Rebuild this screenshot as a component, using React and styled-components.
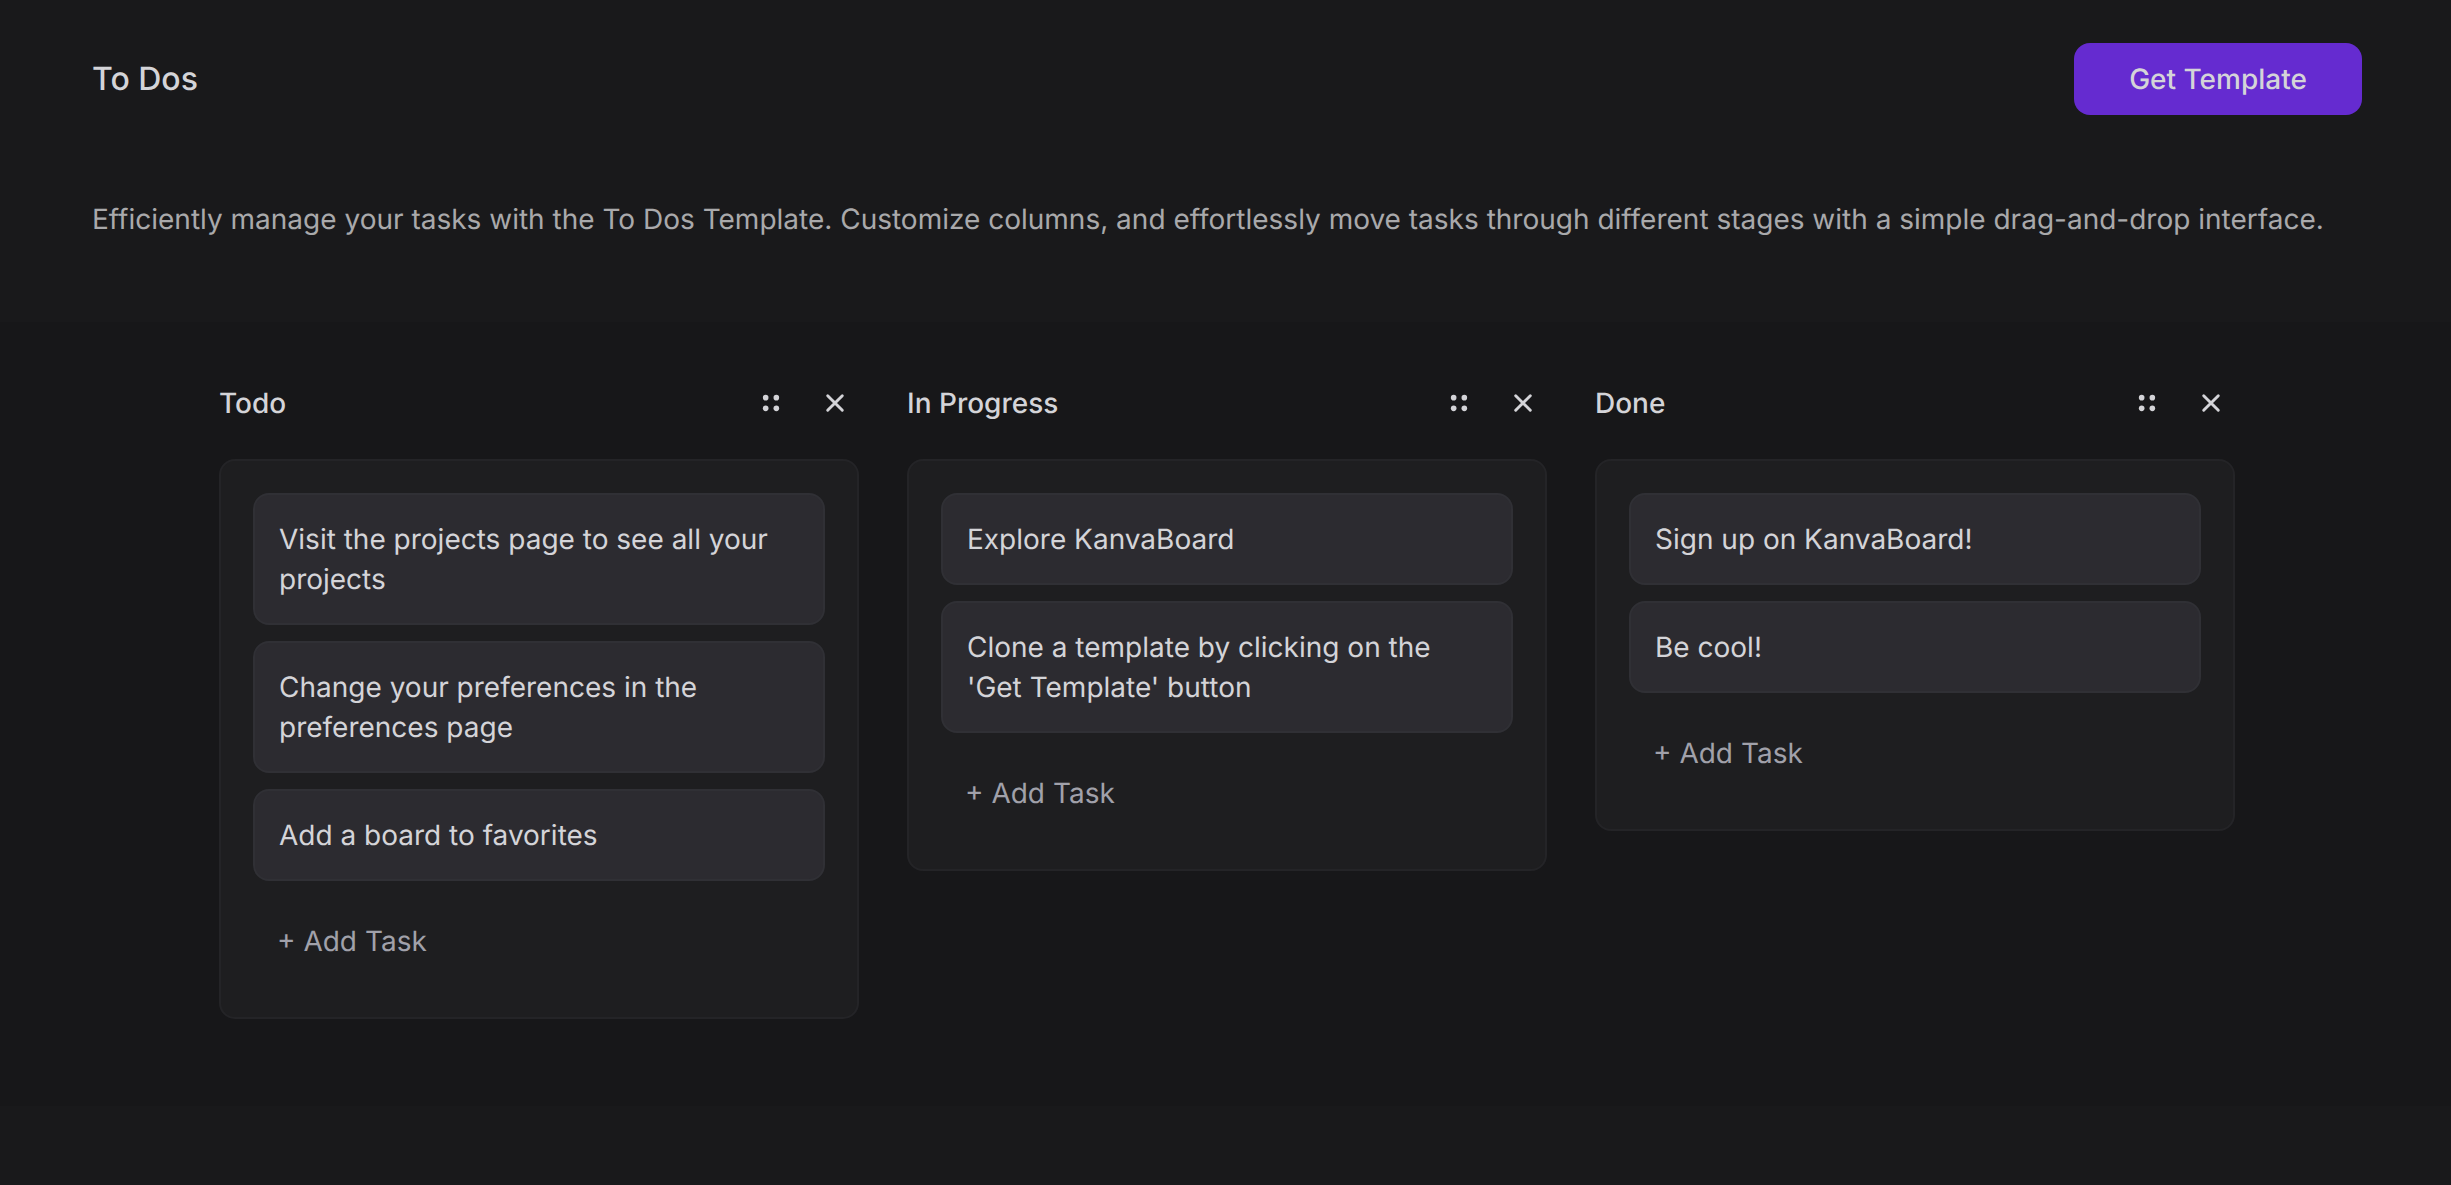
import React from 'react';
import styled, { createGlobalStyle } from 'styled-components';

const GlobalStyle = createGlobalStyle`
  *, *::before, *::after { box-sizing: border-box; }
  body {
    margin: 0;
    background: #19191b;
    color: #d4d4d8;
    font-family: Inter, "Noto Sans", sans-serif;
    font-size: 28px;
    line-height: 40px;
    text-rendering: geometricPrecision;
  }
  h1, h2, p, ul { margin: 0; padding: 0; }
  button { border: 0; background: none; color: inherit; font: inherit; text-rendering: inherit; cursor: pointer; }
`;

const Header = styled.header`
  padding: 43px 89px 83px 92px;
`;

const TitleBar = styled.div`
  display: flex;
  align-items: center;
  justify-content: space-between;
  margin-bottom: 84px;
`;

const Title = styled.h1`
  font-size: 32px;
  font-weight: 500;
`;

const PrimaryButton = styled.button`
  height: 72px;
  min-width: 288px;
  padding: 0 48px;
  border-radius: 16px;
  background: #652bd0;
  font-weight: 500;
`;

const Description = styled.p`
  color: #a9a9ab;
`;

const Board = styled.main`
  display: flex;
  justify-content: center;
  align-items: flex-start;
  gap: 48px;
  padding: 57px 89px 87px 92px;
  background: #171719;
`;

const Column = styled.section`
  flex: 0 1 640px;
  min-width: 0;
`;

const ColumnHeader = styled.div`
  display: flex;
  align-items: center;
  gap: 16px;
  margin-bottom: 32px;
`;

const ColumnTitle = styled.h2`
  flex: 1;
  font-size: 28px;
  font-weight: 500;
`;

const IconButton = styled.button`
  display: grid;
  place-items: center;
  width: 48px;
  height: 48px;
  padding: 0;
`;

const TaskPanel = styled.div`
  padding: 32px;
  border: 2px solid #242427;
  border-radius: 16px;
  background: #1e1e20;
`;

const TaskList = styled.ul`
  display: grid;
  gap: 16px;
  margin-bottom: 16px;
  list-style: none;
`;

const Task = styled.li`
  padding: 24px;
  border: 2px solid #303035;
  border-radius: 16px;
  background: #2c2b30;
`;

const AddTask = styled.button`
  display: block;
  width: 100%;
  padding: 24px;
  color: #a1a1aa;
  text-align: left;
`;

const DotsIcon = () => (
  <svg width="32" height="32" viewBox="0 0 32 32" fill="currentColor" aria-hidden="true">
    <circle cx="10.67" cy="10.67" r="2.8" />
    <circle cx="21.33" cy="10.67" r="2.8" />
    <circle cx="10.67" cy="21.33" r="2.8" />
    <circle cx="21.33" cy="21.33" r="2.8" />
  </svg>
);

const CloseIcon = () => (
  <svg width="32" height="32" viewBox="0 0 32 32" fill="none" stroke="currentColor" strokeWidth="2.9" strokeLinecap="round" aria-hidden="true">
    <path d="M8.7 8.7 23.3 23.3M23.3 8.7 8.7 23.3" />
  </svg>
);

const columns = [
  {
    title: 'Todo',
    tasks: [
      'Visit the projects page to see all your projects',
      'Change your preferences in the preferences page',
      'Add a board to favorites',
    ],
  },
  {
    title: 'In Progress',
    tasks: ['Explore KanvaBoard', "Clone a template by clicking on the 'Get Template' button"],
  },
  { title: 'Done', tasks: ['Sign up on KanvaBoard!', 'Be cool!'] },
];

export default function App() {
  return (
    <>
      <GlobalStyle />
      <Header>
        <TitleBar>
          <Title>To Dos</Title>
          <PrimaryButton type="button">Get Template</PrimaryButton>
        </TitleBar>
        <Description>
          Efficiently manage your tasks with the To Dos Template. Customize columns, and effortlessly move tasks
          through different stages with a simple drag-and-drop interface.
        </Description>
      </Header>
      <Board>
        {columns.map(({ title, tasks }) => (
          <Column key={title}>
            <ColumnHeader>
              <ColumnTitle>{title}</ColumnTitle>
              <IconButton type="button" aria-label={`Move ${title}`}>
                <DotsIcon />
              </IconButton>
              <IconButton type="button" aria-label={`Remove ${title}`}>
                <CloseIcon />
              </IconButton>
            </ColumnHeader>
            <TaskPanel>
              <TaskList>
                {tasks.map((task) => (
                  <Task key={task}>{task}</Task>
                ))}
              </TaskList>
              <AddTask type="button">+ Add Task</AddTask>
            </TaskPanel>
          </Column>
        ))}
      </Board>
    </>
  );
}
